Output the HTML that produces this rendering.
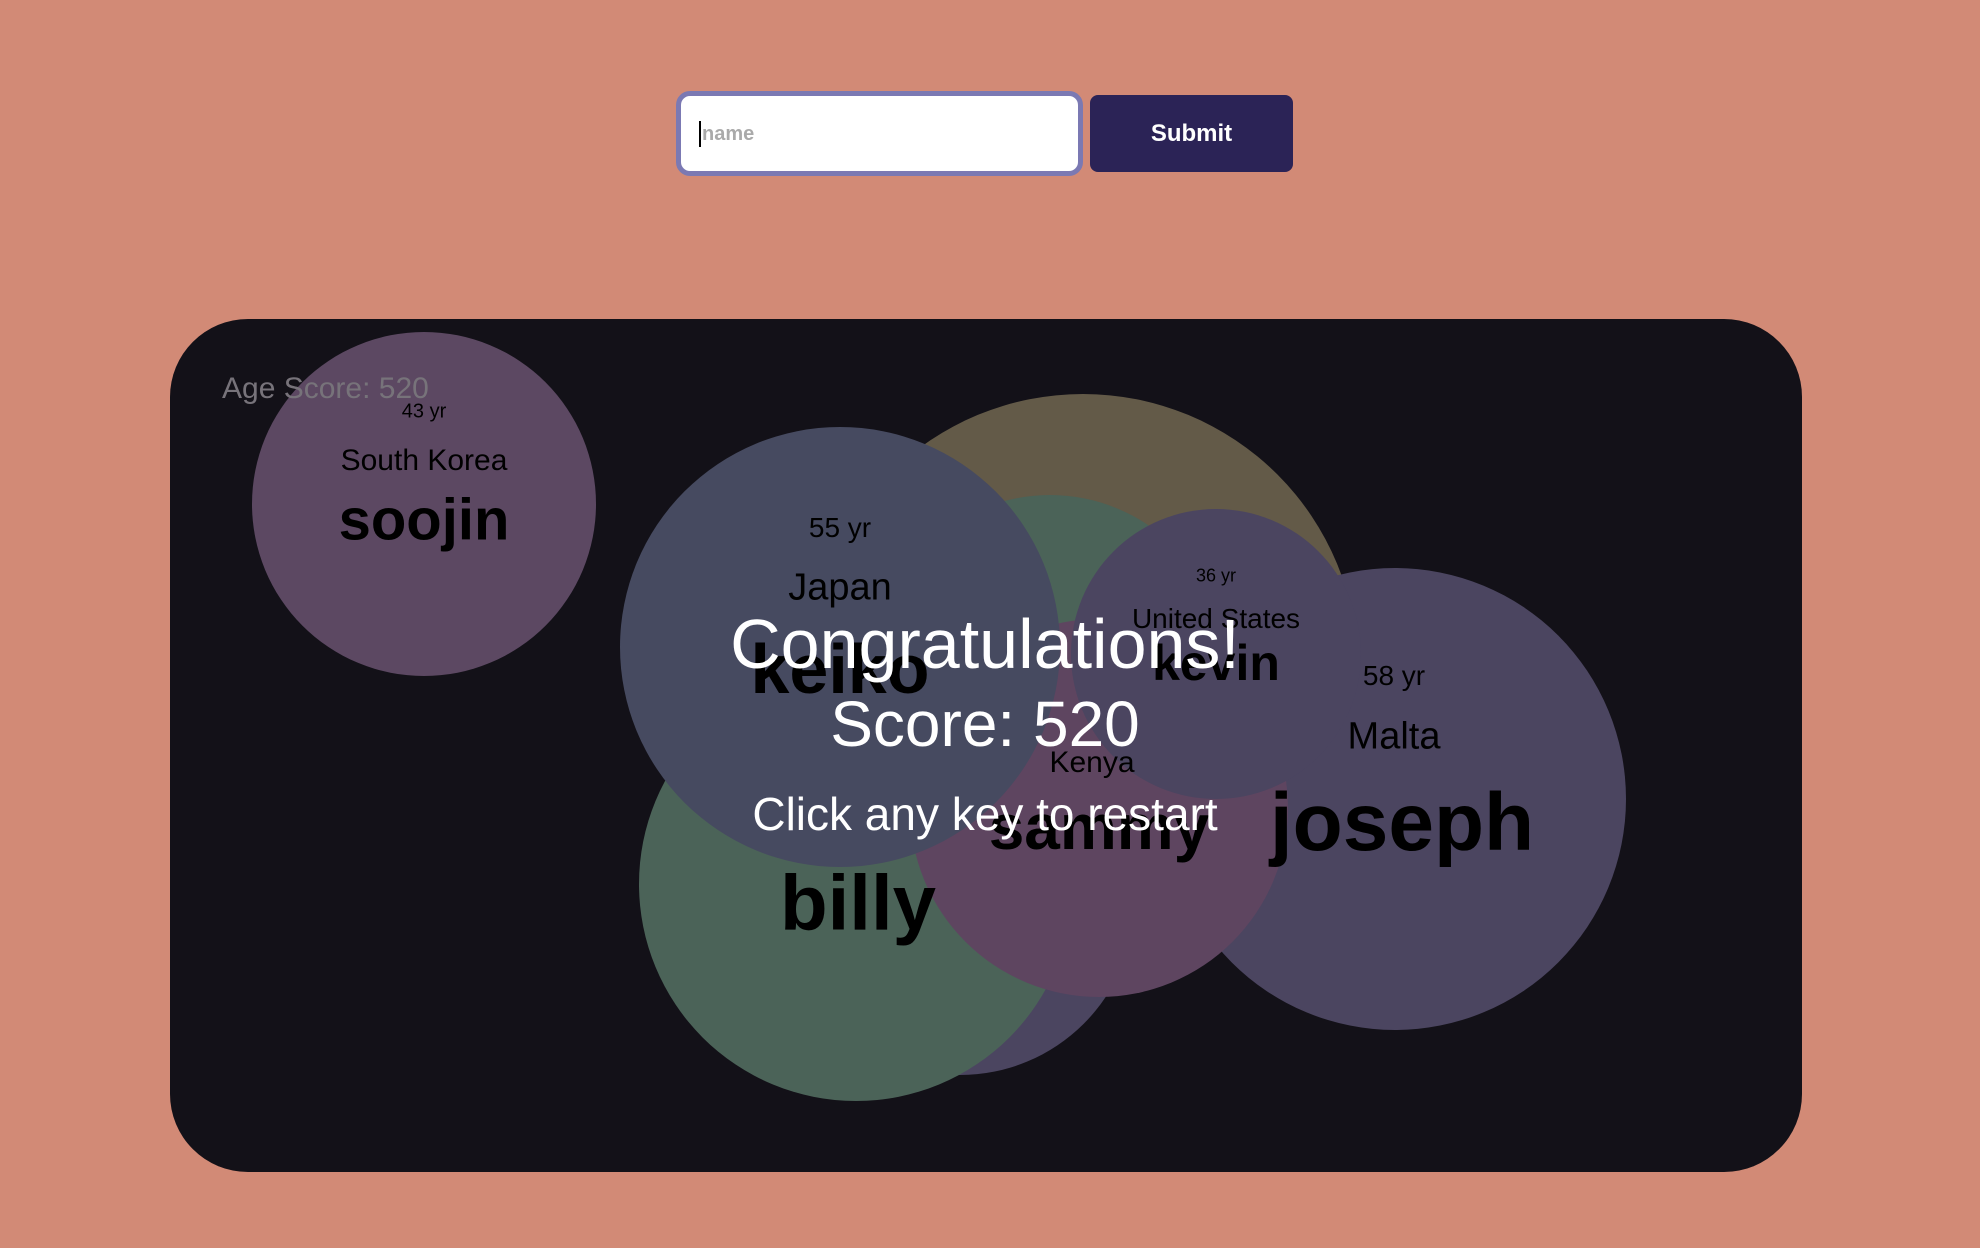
<!DOCTYPE html>
<html><head><meta charset="utf-8"><style>
html,body{margin:0;padding:0;width:1980px;height:1248px;background:#d28a76;overflow:hidden;font-family:"Liberation Sans",sans-serif}
.in{position:absolute;left:676px;top:91px;width:397px;height:75px;background:#fff;border:5px solid #7b79b3;border-radius:14px}
.in span{position:absolute;left:18px;top:25px;font-size:20px;color:#aaa;font-weight:bold;border-left:2px solid #000;padding-left:1px;line-height:26px}
.btn{position:absolute;left:1090px;top:95px;width:203px;height:77px;background:#2b2356;border-radius:8px;color:#fff;font-weight:bold;font-size:24px;text-align:center;line-height:77px}
.panel{position:absolute;left:170px;top:319px;width:1632px;height:853px;background:#131118;border-radius:78px;overflow:hidden}
.t{position:absolute;transform:translate(-50%,-50%);white-space:nowrap;color:#000;font-weight:bold}
.w{position:absolute;transform:translate(-50%,-50%);white-space:nowrap;color:#fff}
</style></head><body>
<div class="in"><span>name</span></div>
<div class="btn">Submit</div>
<div class="panel">
<svg width="1632" height="853" style="position:absolute;left:0;top:0">
<g transform="translate(-170,-319)">
<circle cx="1083" cy="669" r="275" fill="#635a48"/>
<circle cx="1050" cy="670" r="175" fill="#4b6358"/>
<circle cx="960" cy="900" r="175" fill="#4b4560"/>
<circle cx="1395" cy="799" r="231" fill="#4b4560"/>
<circle cx="856" cy="884" r="217" fill="#4b6358"/>
<circle cx="1099" cy="808" r="189" fill="#5e4560"/>
<circle cx="840" cy="647" r="220" fill="#464a60"/>
<circle cx="1216" cy="654" r="145" fill="#4b4560"/>
<circle cx="424" cy="504" r="172" fill="#5c4862"/>
</g></svg>
</div>
<div class="t" style="left:424px;top:412px;font-size:20px;font-weight:normal">43 yr</div>
<div class="t" style="left:424px;top:461px;font-size:30px;font-weight:normal">South Korea</div>
<div class="t" style="left:424px;top:520px;font-size:58px">soojin</div>
<div class="t" style="left:1402px;top:823px;font-size:82px">joseph</div>
<div class="t" style="left:1394px;top:676px;font-size:28px;font-weight:normal">58 yr</div>
<div class="t" style="left:1394px;top:737px;font-size:38px;font-weight:normal">Malta</div>
<div class="t" style="left:858px;top:903px;font-size:78px">billy</div>
<div class="t" style="left:1092px;top:763px;font-size:30px;font-weight:normal">Kenya</div>
<div class="t" style="left:1099px;top:827px;font-size:64px">sammy</div>
<div class="t" style="left:840px;top:528px;font-size:28px;font-weight:normal">55 yr</div>
<div class="t" style="left:840px;top:588px;font-size:38px;font-weight:normal">Japan</div>
<div class="t" style="left:840px;top:669px;font-size:70px">keiko</div>
<div class="t" style="left:1216px;top:576px;font-size:18px;font-weight:normal">36 yr</div>
<div class="t" style="left:1216px;top:619px;font-size:28px;font-weight:normal">United States</div>
<div class="t" style="left:1216px;top:663px;font-size:50px">kevin</div>
<div style="position:absolute;left:222px;top:372px;font-size:30px;color:#77737a">Age Score: 520</div>
<div class="w" style="left:985px;top:644px;font-size:70px">Congratulations!</div>
<div class="w" style="left:985px;top:724px;font-size:64px">Score: 520</div>
<div class="w" style="left:985px;top:814px;font-size:46px">Click any key to restart</div>
</body></html>
